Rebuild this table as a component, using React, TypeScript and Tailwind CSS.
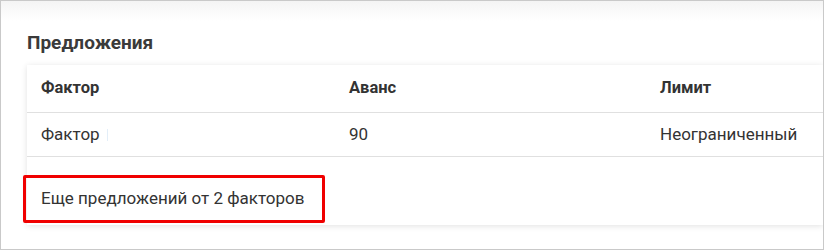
export default function App() {
  const columns = ["Фактор", "Аванс", "Лимит"];
  const rows = [["Фактор", "90", "Неограниченный"]];

  return (
    <div className="w-[824px] h-[250px] bg-white border border-[#c9c9c9] overflow-hidden font-['Roboto',sans-serif] text-[#333]">
      <div className="h-full bg-gradient-to-b from-[#f4f4f4] to-white to-[8%] pl-[26px] pt-[30px]">
        <h2 className="text-[19px] font-bold leading-[24px] text-[#3a3a3a]">Предложения</h2>
        <div className="mt-[10px] bg-white shadow-[0_1px_6px_rgba(0,0,0,0.12)] h-[160px]">
          <div className="grid grid-cols-[308px_311px_1fr] h-[48px] items-center border-b border-[#e0e0e0] px-[14px] text-[16.5px] font-bold">
            {columns.map((c) => (
              <div key={c}>{c}</div>
            ))}
          </div>
          {rows.map((r, i) => (
            <div key={i} className="grid grid-cols-[308px_311px_1fr] h-[44px] items-center border-b border-[#e0e0e0] px-[14px] text-[17px]">
              <div>
                {r[0]}
                <span className="ml-[7px] inline-block w-px h-[12px] bg-[#e3eef8] align-middle" />
              </div>
              <div>{r[1]}</div>
              <div>{r[2]}</div>
            </div>
          ))}
          <div className="pt-[18px]">
            <div className="-ml-[4px] w-[302px] h-[48px] border-[3px] border-[#f00000] rounded-[2px] flex items-center pl-[15px] text-[17px]">
              Еще предложений от 2 факторов
            </div>
          </div>
        </div>
      </div>
    </div>
  );
}
